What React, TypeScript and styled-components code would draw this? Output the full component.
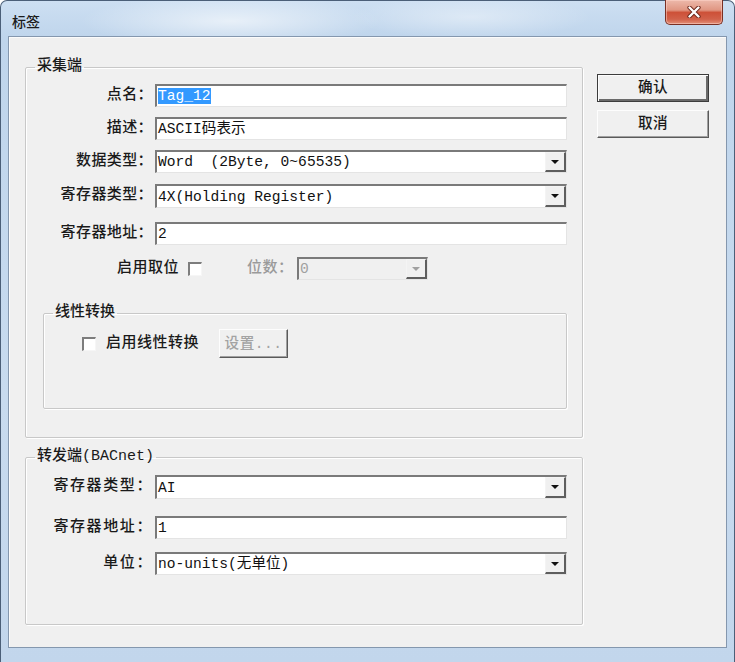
import React from 'react';
import styled, { createGlobalStyle } from 'styled-components';

const FONT = `"Liberation Mono", "Noto Sans CJK SC", monospace`;

const GlobalStyle = createGlobalStyle`
  html, body {
    margin: 0;
    padding: 0;
  }
  body {
    width: 735px;
    height: 662px;
    overflow: hidden;
    font-family: ${FONT};
    background: #fff;
  }
`;

const Window = styled.div`
  box-sizing: border-box;
  width: 735px;
  height: 662px;
  display: flex;
  flex-direction: column;
  padding: 0 7px 14px 7px;
  border: 1px solid #4b5f78;
  border-bottom: none;
  border-radius: 7px 7px 0 0;
  background:
    radial-gradient(ellipse 150px 26px at 230px 20px, rgba(255, 255, 255, 0.6), transparent),
    radial-gradient(ellipse 120px 22px at 470px 16px, rgba(255, 255, 255, 0.4), transparent),
    linear-gradient(180deg, #cddff2 0px, #bfd5ec 36px, #c8dbef 60%, #c2d6ec 100%);
`;

const TitleBar = styled.div`
  height: 35px;
  display: flex;
  align-items: flex-start;
`;

const Title = styled.div`
  padding: 12px 0 0 4px;
  font-family: "Noto Sans CJK SC", sans-serif;
  font-size: 14px;
  font-weight: 500;
  line-height: 16px;
  color: #1b1b1b;
`;

const CloseButton = styled.div`
  box-sizing: border-box;
  margin: -1px 4px 0 auto;
  width: 58px;
  height: 25px;
  display: flex;
  align-items: center;
  justify-content: center;
  border: 1px solid #7a3024;
  border-top: none;
  border-radius: 0 0 5px 5px;
  background: linear-gradient(180deg, #edb9ab 0%, #e09682 42%, #cd5138 52%, #d1614a 80%, #e39079 100%);
  box-shadow: inset 0 0 0 1px rgba(255, 215, 205, 0.5);
`;

const Client = styled.div`
  flex: 1;
  display: flex;
  align-items: flex-start;
  border: 1px solid #8497ae;
  background: #f0f0f0;
  box-shadow: inset 1px 1px 0 #fbfbfb;
`;

const LeftColumn = styled.div`
  width: 558px;
  margin: 23px 0 0 16px;
  display: flex;
  flex-direction: column;
`;

const RightColumn = styled.div`
  width: 112px;
  margin: 37px 0 0 14px;
  display: flex;
  flex-direction: column;
  gap: 8px;
`;

const GroupBox = styled.fieldset<{ $top?: number; $left?: number; $width: number; $bottom: number }>`
  box-sizing: border-box;
  min-width: 0;
  width: ${p => p.$width}px;
  margin: ${p => p.$top ?? 0}px 0 0 ${p => p.$left ?? 0}px;
  padding: 0 0 ${p => p.$bottom}px 0;
  border: 1px solid #c8c8c8;
  border-radius: 2px;
  box-shadow: inset 1px 1px 0 #fff, 1px 1px 0 #fff;
`;

const Legend = styled.legend`
  margin-left: 9px;
  padding: 0 2px;
  font-size: 15px;
  font-weight: 500;
  line-height: 14px;
  color: #1a1a1a;
  white-space: nowrap;
`;

const Row = styled.div<{ $top: number; $indent?: number }>`
  display: flex;
  align-items: center;
  margin-top: ${p => p.$top}px;
  padding-left: ${p => p.$indent ?? 0}px;
`;

const FieldLabel = styled.span<{ $spaced?: boolean }>`
  box-sizing: border-box;
  width: 129px;
  padding-right: 2px;
  text-align: right;
  font-size: 15px;
  font-weight: 500;
  line-height: 16px;
  letter-spacing: ${p => (p.$spaced ? '1.6px' : '0.4px')};
  white-space: nowrap;
  color: #1a1a1a;
`;

const PlainLabel = styled.span<{ $dim?: boolean; $width?: number; $gap?: number }>`
  ${p => (p.$width ? `width: ${p.$width}px;` : '')}
  margin-left: ${p => p.$gap ?? 0}px;
  font-size: 15px;
  font-weight: 500;
  line-height: 16px;
  letter-spacing: 0.5px;
  white-space: nowrap;
  color: ${p => (p.$dim ? '#9a9a9a' : '#1a1a1a')};
`;

const FieldBox = styled.div<{ $width?: number; $height?: number; $disabled?: boolean }>`
  box-sizing: border-box;
  width: ${p => p.$width ?? 412}px;
  height: ${p => p.$height ?? 23}px;
  display: flex;
  align-items: stretch;
  border-top: 2px solid #7a7a7a;
  border-left: 2px solid #7a7a7a;
  border-right: 1px solid #e4e4e4;
  border-bottom: 1px solid #e4e4e4;
  background: ${p => (p.$disabled ? '#f0f0f0' : '#fff')};
`;

const FieldText = styled.div<{ $disabled?: boolean }>`
  flex: 1;
  display: flex;
  align-items: center;
  padding-left: 1px;
  font-size: 14.6px;
  line-height: 16px;
  white-space: pre;
  color: ${p => (p.$disabled ? '#a0a0a0' : '#111')};
`;

const Selected = styled.span`
  background: #3399ff;
  color: #fff;
`;

const DropButton = styled.div<{ $disabled?: boolean }>`
  box-sizing: border-box;
  width: 21px;
  display: flex;
  align-items: center;
  justify-content: center;
  background: #f0f0f0;
  border-left: 1px solid #f4f4f4;
  border-top: 1px solid #f4f4f4;
  border-right: 2px solid #5e5e5e;
  border-bottom: 2px solid #5e5e5e;

  &::after {
    content: '';
    border-left: 4px solid transparent;
    border-right: 4px solid transparent;
    border-top: 4px solid ${p => (p.$disabled ? '#a0a0a0' : '#111')};
  }
`;

const CheckBox = styled.span<{ $gap: number }>`
  box-sizing: border-box;
  width: 14px;
  height: 14px;
  margin-left: ${p => p.$gap}px;
  flex-shrink: 0;
  background: #fff;
  border-top: 2px solid #7d7d7d;
  border-left: 2px solid #7d7d7d;
  border-right: 1px solid #f6f6f6;
  border-bottom: 1px solid #f6f6f6;
`;

const PushButton = styled.div<{ $default?: boolean; $disabled?: boolean; $width?: number; $height?: number; $gap?: number }>`
  box-sizing: border-box;
  width: ${p => p.$width ?? 112}px;
  height: ${p => p.$height ?? 28}px;
  margin-left: ${p => p.$gap ?? 0}px;
  display: flex;
  align-items: center;
  justify-content: center;
  background: #f0f0f0;
  border: 1px solid;
  border-color: ${p => (p.$default ? '#3c3c3c' : '#fdfdfd #5a5a5a #5a5a5a #fdfdfd')};
  box-shadow: ${p =>
    p.$default
      ? 'inset 1px 1px 0 #fdfdfd, inset -2px -2px 0 #6a6a6a'
      : 'inset -1px -1px 0 #a0a0a0'};
  font-size: 14.6px;
  font-weight: 500;
  line-height: 16px;
  letter-spacing: 0.5px;
  color: ${p => (p.$disabled ? '#a3a3a3' : '#1a1a1a')};
`;

type FieldProps = {
  label: string;
  value: React.ReactNode;
  top: number;
  combo?: boolean;
  spaced?: boolean;
  height?: number;
};

const Field = ({ label, value, top, combo, spaced, height }: FieldProps) => (
  <Row $top={top}>
    <FieldLabel $spaced={spaced}>{label}</FieldLabel>
    <FieldBox $height={height}>
      <FieldText>{value}</FieldText>
      {combo && <DropButton />}
    </FieldBox>
  </Row>
);

const CloseGlyph = () => (
  <svg width="14" height="12" viewBox="0 0 14 12">
    <path d="M2.5 1.5 L11.5 10.5 M11.5 1.5 L2.5 10.5" stroke="#6a2418" strokeWidth="4.2" strokeLinecap="round" />
    <path d="M2.5 1.5 L11.5 10.5 M11.5 1.5 L2.5 10.5" stroke="#fff" strokeWidth="2.4" strokeLinecap="round" />
  </svg>
);

export default function App() {
  return (
    <>
      <GlobalStyle />
      <Window>
        <TitleBar>
          <Title>标签</Title>
          <CloseButton>
            <CloseGlyph />
          </CloseButton>
        </TitleBar>
        <Client>
          <LeftColumn>
            <GroupBox $width={558} $bottom={28}>
              <Legend>采集端</Legend>
              <Field top={10} label="点名：" value={<Selected>Tag_12</Selected>} />
              <Field top={10} label="描述：" value="ASCII码表示" />
              <Field top={10} label="数据类型：" value="Word  (2Byte, 0~65535)" combo />
              <Field top={11} label="寄存器类型：" value="4X(Holding Register)" combo height={24} />
              <Field top={14} label="寄存器地址：" value="2" />
              <Row $top={12} $indent={91}>
                <PlainLabel>启用取位</PlainLabel>
                <CheckBox $gap={9} />
                <PlainLabel $dim $gap={45} $width={50}>位数：</PlainLabel>
                <FieldBox $width={131} $disabled>
                  <FieldText $disabled>0</FieldText>
                  <DropButton $disabled />
                </FieldBox>
              </Row>
              <GroupBox $top={26} $left={17} $width={524} $bottom={50}>
                <Legend>线性转换</Legend>
                <Row $top={9} $indent={38}>
                  <CheckBox $gap={0} />
                  <PlainLabel $gap={10}>启用线性转换</PlainLabel>
                  <PushButton $disabled $width={69} $height={29} $gap={20}>
                    设置...
                  </PushButton>
                </Row>
              </GroupBox>
            </GroupBox>
            <GroupBox $top={12} $width={558} $bottom={49}>
              <Legend>转发端(BACnet)</Legend>
              <Field top={11} spaced label="寄存器类型：" value="AI" combo height={24} />
              <Field top={17} spaced label="寄存器地址：" value="1" />
              <Field top={13} spaced label="单位：" value="no-units(无单位)" combo />
            </GroupBox>
          </LeftColumn>
          <RightColumn>
            <PushButton $default>确认</PushButton>
            <PushButton>取消</PushButton>
          </RightColumn>
        </Client>
      </Window>
    </>
  );
}
